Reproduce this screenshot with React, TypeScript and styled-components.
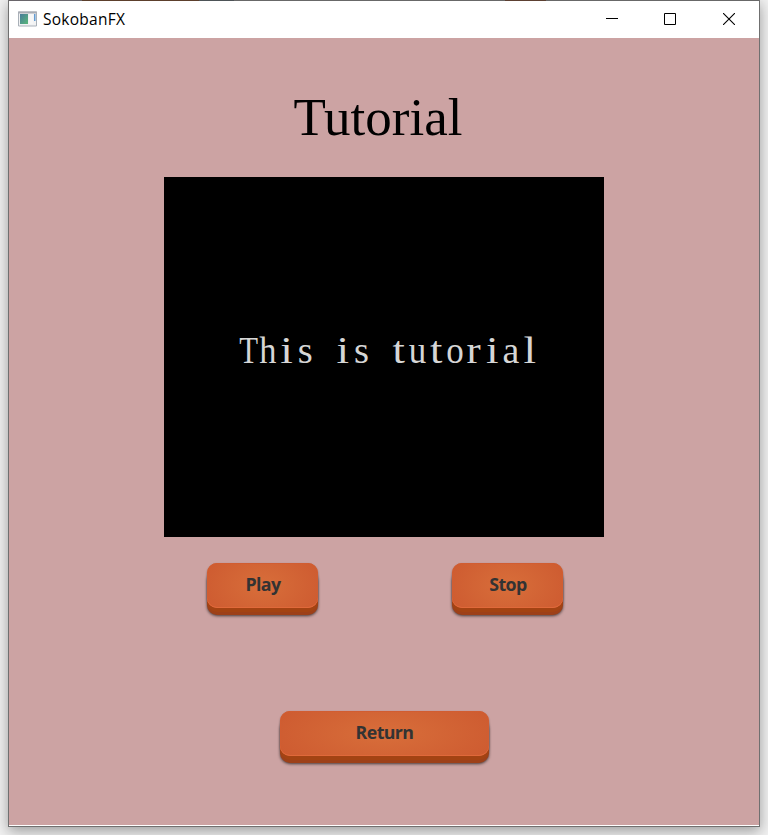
import React from "react";
import styled, { createGlobalStyle } from "styled-components";

const GlobalStyle = createGlobalStyle`
  html, body { margin: 0; height: 100%; overflow: hidden; background: #f1f1f1; }
  #root { height: 100%; }
  * { box-sizing: border-box; }
`;

const Desktop = styled.div`
  height: 835px;
  padding: 0 8px 8px;
  overflow: hidden;
`;

const Window = styled.div`
  width: 752px;
  height: 827px;
  display: flex;
  flex-direction: column;
  border: 1px solid #707070;
  border-top: 0;
  background: #fff;
  box-shadow: 0 4px 13px rgba(0, 0, 0, 0.36);
`;

const TopEdge = styled.div`
  flex: 0 0 1px;
  background: linear-gradient(
    90deg,
    #69656a 73px,
    #5c3f2c 73px 190px,
    #4d5357 190px 225px,
    #686868 225px 496px,
    #5c4032 496px 537px,
    #686868 537px
  );
`;

const TitleBar = styled.header`
  flex: 0 0 37px;
  display: flex;
  align-items: center;
  padding: 0 0 2px 9px;
`;

const AppTitle = styled.span`
  margin-left: 6px;
  flex: 1;
  font: 15.5px/20px "Open Sans", "Noto Sans", sans-serif;
  letter-spacing: 0.25px;
  color: #000;
`;

const ControlButton = styled.button`
  width: 58px;
  height: 35px;
  padding: 0;
  border: 0;
  background: none;
  display: grid;
  place-items: center;
  &:last-child { width: 60px; }
`;

const Scene = styled.main`
  flex: 0 0 787px;
  display: flex;
  flex-direction: column;
  align-items: center;
  background: #cca3a3;
`;

const Heading = styled.h1`
  margin: 49px 12px 0 0;
  height: 60px;
  font: 400 53px/60px "Liberation Serif", serif;
  color: #000;
`;

const Video = styled.div`
  width: 440px;
  height: 360px;
  margin-top: 30px;
  background: #000;
`;

const VideoFrame = styled.svg`
  display: block;
`;

const Caption = styled.text`
  font: 38.5px "Liberation Serif", serif;
  fill: #d6d6d6;
`;

const Controls = styled.div`
  display: flex;
  gap: 134px;
  margin: 26px 0 0 2px;
`;

const OrangeButton = styled.button<{ $width: number }>`
  width: ${(p) => p.$width}px;
  height: 45px;
  padding: 0 0 3px 1px;
  border: 0;
  border-radius: 10px;
  font: 700 17.8px/24px "Open Sans", "Noto Sans", sans-serif;
  letter-spacing: -0.6px;
  color: #333;
  background: radial-gradient(ellipse 60% 100% at 50% 50%, #d86e3a, #cd5a30);
  box-shadow:
    inset 0 -1px 0 #e0693a,
    inset 0 0 0 1px #d15d31,
    0 4px 0 #a34313,
    0 7px 0 #9d4019,
    0 8px 3px rgba(0, 0, 0, 0.65),
    0 1px 2px rgba(0, 0, 0, 0.45);
`;

const ReturnRow = styled.div`
  margin-top: 103px;
`;

const caption = "This is tutorial";
const cellPitch = 18.7;
const glyphWidths: Record<string, number> = {
  T: 18.8, h: 17.2, i: 12.6, s: 15, t: 12.4, u: 17.5, o: 17.5, r: 14.2, a: 16.8, l: 12.6, " ": 9,
};

function AppIcon() {
  return (
    <svg width="19" height="16" viewBox="0 0 19 16">
      <defs>
        <linearGradient id="pane" x1="0" y1="0" x2="1" y2="1">
          <stop offset="0" stopColor="#477b9b" />
          <stop offset="1" stopColor="#58b778" />
        </linearGradient>
      </defs>
      <path d="M.5 1h18v14H.5z" fill="#f1f2f3" stroke="#a9b0b8" />
      <path d="M0 .5h19v2H0z" fill="#a9adb4" />
      <path d="M2 3h8v10H2z" fill="url(#pane)" />
      <path d="M11 3h4v10h-4z" fill="#f6f6f6" />
      <path d="M16 3h1.5v7H16z" fill="#639bd2" />
    </svg>
  );
}

export default function App() {
  return (
    <>
      <GlobalStyle />
      <Desktop>
        <Window>
          <TopEdge />
          <TitleBar>
            <AppIcon />
            <AppTitle>SokobanFX</AppTitle>
            <ControlButton aria-label="Minimize">
              <svg width="12" height="12"><path d="M0 5.5h12" stroke="#000" /></svg>
            </ControlButton>
            <ControlButton aria-label="Maximize">
              <svg width="12" height="12"><path d="M.5.5h11v11H.5z" fill="none" stroke="#000" /></svg>
            </ControlButton>
            <ControlButton aria-label="Close">
              <svg width="12" height="12"><path d="M0 0l12 12M12 0L0 12" stroke="#000" strokeWidth="1.1" /></svg>
            </ControlButton>
          </TitleBar>
          <Scene>
            <Heading>Tutorial</Heading>
            <Video>
              <VideoFrame width="440" height="360">
                <Caption y="186">
                  {Array.from(caption, (ch, i) => (
                    <tspan
                      key={i}
                      x={(i === 0 ? 84.6 : 85.2) + i * cellPitch - glyphWidths[ch] / 2}
                      textLength={glyphWidths[ch]}
                      lengthAdjust="spacingAndGlyphs"
                    >
                      {ch}
                    </tspan>
                  ))}
                </Caption>
              </VideoFrame>
            </Video>
            <Controls>
              <OrangeButton $width={111}>Play</OrangeButton>
              <OrangeButton $width={111}>Stop</OrangeButton>
            </Controls>
            <ReturnRow>
              <OrangeButton $width={209}>Return</OrangeButton>
            </ReturnRow>
          </Scene>
        </Window>
      </Desktop>
    </>
  );
}
